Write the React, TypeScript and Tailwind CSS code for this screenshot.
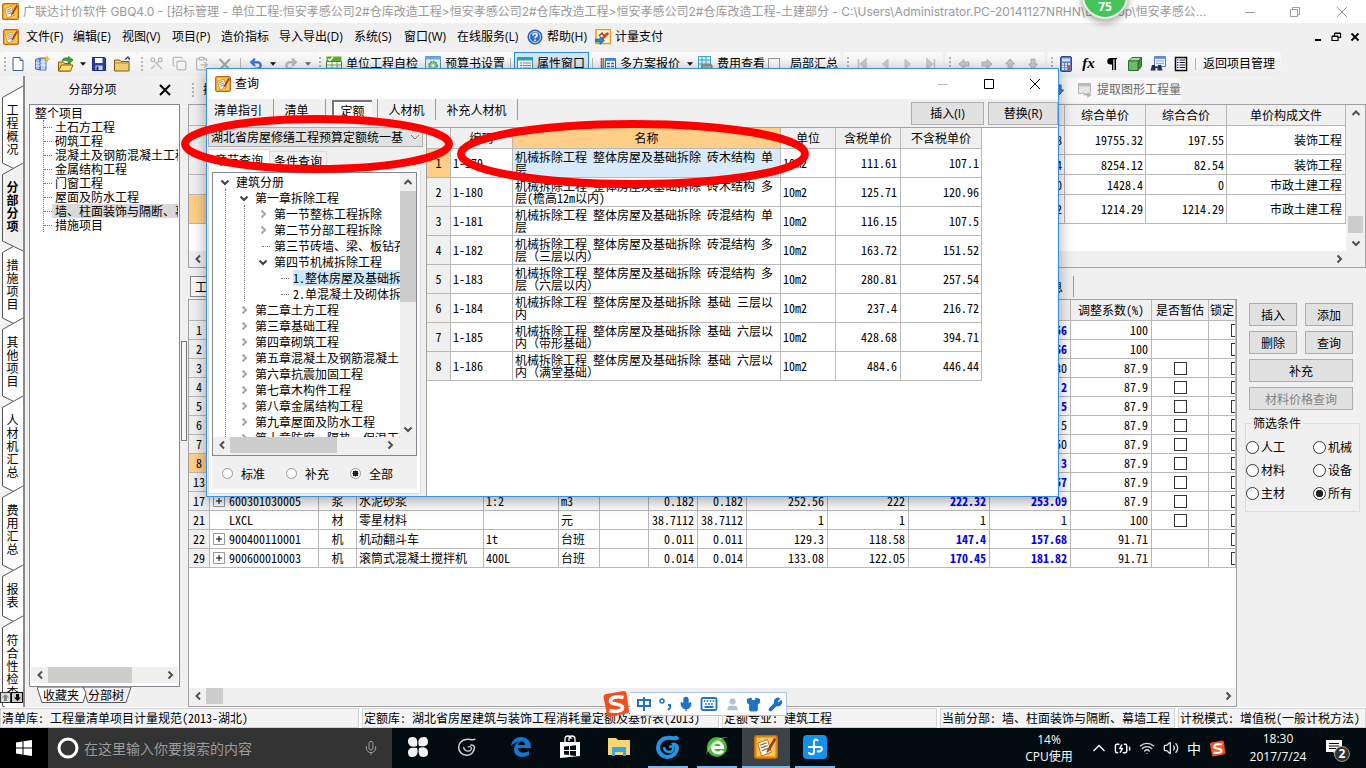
import React from "react";
import { Mic, Wrench, Shirt, Keyboard, Scissors, Copy, ClipboardPaste, Undo2, Redo2, BatteryCharging, Wifi, Volume2, User } from "lucide-react";

const songti = "font-['Noto_Sans_Mono_CJK_SC','Noto_Sans_CJK_SC',monospace]";
const yahei = "font-['Open_Sans','Noto_Sans_CJK_SC',sans-serif]";

/* ---------- small drawings ---------- */

function AppIcon({ size = 16 }: { size?: number }) {
  return (
    <svg width={size} height={size} viewBox="0 0 16 16" className="shrink-0">
      <rect x="0.5" y="0.5" width="15" height="15" rx="1.5" fill="#f6a01a" stroke="#c06a10" />
      <rect x="2" y="2" width="12" height="12" fill="#fdc95a" />
      <path d="M2.500 5.500 9 3l2.500 8.500-6.500 2.500z" fill="#fffdf4" stroke="#a8641a" strokeWidth=".6" />
      <path d="M4 6.800l4.500-1.600M4.600 8.600l4.500-1.600M5.200 10.400l4-1.500" stroke="#8a6b3a" strokeWidth=".8" />
      <path d="M13.600 2 9.200 9.600l-.6 2 1.600-1.200L14.500 3z" fill="#b93c0c" stroke="#7c2d12" strokeWidth=".5" />
    </svg>
  );
}

function Chevron({ dir, color = "#505050" }: { dir: "left" | "right" | "up" | "down"; color?: string }) {
  const d = {
    left: "M8 2.500 4.500 6 8 9.500",
    right: "M4.500 2.500 8 6 4.500 9.500",
    up: "M2.500 8 6 4.500 9.500 8",
    down: "M2.500 4.500 6 8 9.500 4.500",
  }[dir];
  return (
    <svg width="12" height="12" viewBox="0 0 12 12" className="shrink-0">
      <path d={d} fill="none" stroke={color} strokeWidth="2" />
    </svg>
  );
}

function Caret({ color = "#111" }: { color?: string }) {
  return (
    <svg width="6" height="4" viewBox="0 0 7 4">
      <path d="M0 0h7L3.500 4z" fill={color} />
    </svg>
  );
}

function Grip() {
  return (
    <svg width="3" height="16" viewBox="0 0 3 16" className="shrink-0">
      <path d="M0 1h2v2H0zM0 5h2v2H0zM0 9h2v2H0zM0 13h2v2H0z" fill="#b4b4b4" />
    </svg>
  );
}

function ToolIcon({ name }: { name: string }) {
  const body: Record<string, React.ReactNode> = {
    doc: (
      <>
        <path d="M3 1.500h7l3 3v10H3z" fill="#fff" stroke="#41618c" />
        <path d="M10 1.500v3h3" fill="#c9d8ee" stroke="#41618c" />
      </>
    ),
    newProject: (
      <>
        <path d="M1.500 3.500 6 2v12l-4.500-1zM6 2h6v12H6z" fill="#9dbce8" stroke="#3f67a8" strokeWidth=".9" />
        <path d="M8 3v11M10 3v11M6 6h6M6 9h6M1.500 7H6M1.500 10H6" stroke="#fff" strokeWidth=".7" />
        <path d="M13 0l.8 2.200L16 3l-2.200.8L13 6l-.8-2.200L10 3l2.200-.8z" fill="#f7c51e" stroke="#e0a400" strokeWidth=".5" />
      </>
    ),
    open: (
      <>
        <path d="M.5 6h5l1 1.500h6V15H.5z" fill="#f5c243" stroke="#8a6212" />
        <path d="M.5 15 3.500 9H15l-2.500 6z" fill="#fbdc78" stroke="#8a6212" />
        <path d="M4 5c1-3 4-4 6.500-2.500V.5L15 4l-4.500 4V5.500C8.500 4 6 4 4 5z" fill="#3aa935" stroke="#1d6b1a" strokeWidth=".7" />
      </>
    ),
    save: (
      <>
        <path d="M1.500 1.500h12l1 1v12h-13z" fill="#2b3f9e" stroke="#1b2a78" />
        <path d="M4 2h7.500v5H4z" fill="#fff" />
        <path d="M4.500 9.500h7V14h-7z" fill="#cdd5ef" />
        <path d="M5.500 10.500h2V14h-2z" fill="#1b2a78" />
      </>
    ),
    folder: (
      <>
        <path d="M.5 4h5l1.500 1.500h8V15H.5z" fill="#f2cb73" stroke="#7a5a1c" />
        <path d="M.5 7h14" stroke="#b48a36" />
        <path d="M11 3.500 14 1l2 3" fill="none" stroke="#334d88" strokeWidth="1.500" />
      </>
    ),
    check: (
      <>
        <path d="M.5.500h15v5H.5z" fill="#5cae2b" />
        <path d="M.5 5.500h15v10H.5z" fill="#fff" stroke="#4b7f35" />
        <path d="M1 9h15M1 12h15M6 6v10M11 6v10" stroke="#76a95b" />
        <path d="M2 3l2 1.500L7 1" stroke="#fff" strokeWidth="1.300" fill="none" />
      </>
    ),
    gear: (
      <>
        <path d="M.5.500h15v15H.5z" fill="#e5f0fb" stroke="#5a8fc4" />
        <path d="M.5.500h15v3H.5z" fill="#72aade" />
        <circle cx="8" cy="9.500" r="4" fill="#8ccf8f" stroke="#3f9447" strokeDasharray="1.600 1" strokeWidth="1.500" />
        <circle cx="8" cy="9.500" r="1.500" fill="#fff" />
      </>
    ),
    prop: (
      <>
        <path d="M.5 1.500h15v13H.5z" fill="#fff" stroke="#5d8a96" />
        <path d="M.5 1.500h15v3H.5z" fill="#27a3bf" />
        <path d="M3 7h2M3 9.500h2M3 12h2" stroke="#3aa935" />
        <path d="M6 7h8M6 9.500h8M6 12h8" stroke="#888" />
      </>
    ),
    multi: (
      <>
        <path d="M1.500 2v12" stroke="#d33" strokeWidth="1.500" />
        <path d="M3.500 2v12" stroke="#3a3" strokeWidth="1.500" />
        <path d="M5.500 2.500h10v11h-10z" fill="#fff" stroke="#2867c0" />
        <path d="M5.500 2.500h10v2.500h-10z" fill="#4b8fe0" />
        <path d="M7 7.500h3M11 7.500h3M7 10.500h3M11 10.500h3" stroke="#2867c0" strokeWidth="1.500" />
      </>
    ),
    fee: (
      <>
        <path d="M1.500.500h12v12h-12z" fill="#d6f1fa" stroke="#3fa7c8" />
        <path d="M1.500 4h12M1.500 8h12M5 .500v12M9 .500v12" stroke="#3fa7c8" />
        <path d="M5 9h10v5H5z" fill="#b9a98a" stroke="#80704f" />
      </>
    ),
    calc: (
      <>
        <rect x="2.500" y=".5" width="11" height="15" rx="1.500" fill="#5b7fc4" stroke="#2d4a88" />
        <path d="M4 2.500h8v3H4z" fill="#d5e4fb" />
        <path d="M4 8h2M7 8h2M10 8h2M4 10.500h2M7 10.500h2M4 13h2M7 13h2" stroke="#fff" strokeWidth="1.500" />
        <path d="M10 10.500h2M10 13h2" stroke="#e33" strokeWidth="1.500" />
      </>
    ),
    cube: (
      <>
        <path d="M1.500 5 5 1.500h9.500L11 5z" fill="#a8dca0" stroke="#2f6e31" />
        <path d="M11 5l3.500-3.500v9L11 14.500z" fill="#3d8a41" stroke="#2f6e31" />
        <path d="M1.500 5H11v9.500H1.500z" fill="#6dbb66" stroke="#2f6e31" />
      </>
    ),
    find: (
      <>
        <path d="M4.500.500h11v10h-11z" fill="#eaf2fd" stroke="#5277b8" />
        <path d="M4.500.500h11v2.500h-11z" fill="#6b96dc" />
        <path d="M6 5h8M6 7.500h8" stroke="#8aa7d3" />
        <path d="M2 9h3v2h3V9h3l1.500 5.500h-5V12h-2v2.500H.5z" fill="#223250" />
      </>
    ),
    list: (
      <>
        <path d="M2.500 1.500h11v13h-11z" fill="#fff" stroke="#000" strokeWidth="1.500" />
        <path d="M4 4h1.500M4 6.500h1.500M4 9h1.500M4 11.500h1.500" stroke="#00f" />
        <path d="M6.500 4H12M6.500 6.500H12M6.500 9H12M6.500 11.500H12" stroke="#113" />
      </>
    ),
    pilcrow: <path d="M13 2H6.500a3 3 0 0 0 0 6.500H8V14h1.300V3.200h1.200V14H12V3.200h1z" fill="#000" />,
    cross: <path d="M2.500 3 13 14M13 3 2.500 14" stroke="#a8a8a8" strokeWidth="2" />,
    first: <path d="M4.500 3v10M12 3l-5.500 5 5.500 5z" fill="#ccc" stroke="#c4c4c4" strokeWidth="1.500" />,
    prev: <path d="M11 3 5.500 8l5.500 5z" fill="#ccc" stroke="#c4c4c4" />,
    next: <path d="M5 3l5.500 5L5 13z" fill="#ccc" stroke="#c4c4c4" />,
    last: <path d="M11.500 3v10M4 3l5.500 5L4 13z" fill="#ccc" stroke="#c4c4c4" strokeWidth="1.500" />,
    aLeft: <path d="M3 8l5-4.500v2.500h5v4H8v2.500z" fill="#c9c9c9" stroke="#b0b0b0" />,
    aRight: <path d="M13 8 8 3.500v2.500H3v4h5v2.500z" fill="#c9c9c9" stroke="#b0b0b0" />,
    aUp: <path d="M8 3l4.500 5H10v5H6V8H3.500z" fill="#c9c9c9" stroke="#b0b0b0" />,
    aDown: <path d="M8 13l4.500-5H10V3H6v5H3.500z" fill="#c9c9c9" stroke="#b0b0b0" />,
    blueDown: <path d="M8 13l4.500-5H10V3H6v5H3.500z" fill="#4f86e0" stroke="#2a55a8" />,
    extract: (
      <>
        <path d="M1.500 1.500h12v10h-12z" fill="#e6e6e6" stroke="#b5b5b5" />
        <path d="M1.500 1.500h12v3h-12z" fill="#bdbdbd" />
        <path d="M5 7c0 3 2 4 5 4V9l5 4-5 3.500V14c-4 0-6-3-5-7z" fill="#b5b5b5" stroke="#fff" strokeWidth=".6" />
      </>
    ),
    help: (
      <>
        <circle cx="8" cy="8" r="7" fill="#2f6fd0" stroke="#1b4a98" />
        <circle cx="8" cy="8" r="5.500" fill="none" stroke="#cfe0fb" />
        <path d="M6 6.500c0-3 4.500-2.500 4 0-.2 1-2 1.200-2 2.700M8 10.500V12" fill="none" stroke="#fff" strokeWidth="1.600" />
      </>
    ),
    pay: (
      <>
        <path d="M1 .500h14.500v14H1z" fill="#fff4d0" stroke="#e39a1e" strokeWidth="1.500" />
        <path d="M4 7l3-3 2 3 3-3" fill="none" stroke="#a0301c" strokeWidth="1.400" />
        <path d="M6 9l7-6 1 2-6 6z" fill="#d8452a" />
        <path d="M0 10h5V7.500l4.500 4L5 15.500V13H0z" fill="#1c8fd0" stroke="#0b5f96" strokeWidth=".6" />
      </>
    ),
  };
  return (
    <svg width="16" height="16" viewBox="0 0 16 16" fill="none" className="shrink-0">
      {body[name]}
    </svg>
  );
}

function IconButton({ label, w, children }: { label: string; w: string; children: React.ReactNode }) {
  return (
    <button aria-label={label} className={`flex h-6 shrink-0 items-center justify-center ${w}`}>
      {children}
    </button>
  );
}

function ToolGroup({ children, className = "" }: { children: React.ReactNode; className?: string }) {
  return (
    <div className={`flex h-6 shrink-0 items-center rounded bg-gradient-to-b from-[#fbfbfb] to-[#ededed] pl-1 ${className}`}>
      <Grip />
      {children}
    </div>
  );
}

function Divider() {
  return <span className="mx-[3px] h-3 w-px shrink-0 bg-[#b8b8b8]" />;
}

/* ---------- scroll bars ---------- */

function HScroll({ thumb, className = "" }: { thumb: string; className?: string }) {
  return (
    <div className={`flex h-4 shrink-0 items-center bg-[#f0f0f0] ${className}`}>
      <span className="flex w-[17px] shrink-0 justify-center">
        <Chevron dir="left" />
      </span>
      <span className="flex h-full min-w-0 flex-1">
        <span className={`h-full bg-[#cdcdcd] ${thumb}`} />
      </span>
      <span className="flex w-[17px] shrink-0 justify-center">
        <Chevron dir="right" />
      </span>
    </div>
  );
}

/* ---------- window chrome ---------- */

function TitleBar() {
  return (
    <header className="flex h-[23px] shrink-0 items-center bg-white pl-[2px] font-['Inter','Noto_Sans_CJK_SC',sans-serif] text-[12px] text-[#999]">
      <AppIcon size={17} />
      <span className="ml-1 min-w-0 flex-1 truncate whitespace-nowrap">
        广联达计价软件 GBQ4.0 - [招标管理 - 单位工程:恒安孝感公司2#仓库改造工程&gt;恒安孝感公司2#仓库改造工程&gt;恒安孝感公司2#仓库改造工程-土建部分 - C:\Users\Administrator.PC-20141127NRHN\Desktop\恒安孝感公...
      </span>
      <div className="flex shrink-0">
        <button aria-label="最小化" className="flex w-[45px] justify-center">
          <svg width="12" height="12"><path d="M1 6.500h10" stroke="#999" /></svg>
        </button>
        <button aria-label="还原" className="flex w-[45px] justify-center">
          <svg width="12" height="12" fill="none"><path d="M1.500 3.500h7v7h-7zM3.500 3V1.500h7v7H9" stroke="#999" /></svg>
        </button>
        <button aria-label="关闭" className="flex w-[49px] justify-center">
          <svg width="12" height="12"><path d="M1 1l10 10M11 1 1 11" stroke="#999" /></svg>
        </button>
      </div>
    </header>
  );
}

const menus: [string, string][] = [
  ["文件(F)", "w-[47px]"],
  ["编辑(E)", "w-[49px]"],
  ["视图(V)", "w-[50px]"],
  ["项目(P)", "w-[49px]"],
  ["造价指标", "w-[58px]"],
  ["导入导出(D)", "w-[75px]"],
  ["系统(S)", "w-[50px]"],
  ["窗口(W)", "w-[53px]"],
  ["在线服务(L)", "w-[70px]"],
];

function MenuBar() {
  return (
    <nav className={`flex h-[28px] shrink-0 items-center bg-[#f0f0f0] pl-[3px] text-[12px] ${yahei}`}>
      <AppIcon size={16} />
      <span className="w-[7px]" />
      {menus.map(([m, w]) => (
        <button key={m} className={`shrink-0 whitespace-nowrap text-left ${w}`}>{m}</button>
      ))}
      <ToolIcon name="help" />
      <button className="ml-1 w-[48px] shrink-0 text-left whitespace-nowrap">帮助(H)</button>
      <ToolIcon name="pay" />
      <button className="ml-1 shrink-0 whitespace-nowrap">计量支付</button>
      <div className="ml-auto flex items-center gap-2 pr-[6px]">
        <svg width="10" height="10"><path d="M2 8h6" stroke="#000" strokeWidth="2" /></svg>
        <svg width="11" height="10" fill="none"><path d="M1 4.500h6v4H1zM3.500 4V1.500h6v4H7M1 4h6M3.500 1h6" stroke="#000" strokeWidth="1.200" /></svg>
        <svg width="10" height="10"><path d="M1.500 1.500l7 7M8.500 1.500l-7 7" stroke="#000" strokeWidth="1.800" /></svg>
      </div>
    </nav>
  );
}

function Toolbar() {
  const faded = "#b8b8b8";
  return (
    <div className={`flex h-[25px] shrink-0 items-center overflow-hidden whitespace-nowrap bg-[#f0f0f0] text-[12px] ${yahei}`}>
      <ToolGroup className="w-[137px]">
        <IconButton label="新建" w="w-[22px]"><ToolIcon name="doc" /></IconButton>
        <IconButton label="新建项目" w="w-[25px]"><ToolIcon name="newProject" /></IconButton>
        <IconButton label="打开" w="w-[24px]"><ToolIcon name="open" /></IconButton>
        <IconButton label="打开选项" w="w-[9px]"><Caret /></IconButton>
        <IconButton label="保存" w="w-[24px]"><ToolIcon name="save" /></IconButton>
        <IconButton label="目录" w="w-[22px]"><ToolIcon name="folder" /></IconButton>
      </ToolGroup>
      <ToolGroup className="w-[178px]">
        <IconButton label="剪切" w="w-[24px]"><Scissors size={15} color={faded} className="rotate-90" /></IconButton>
        <IconButton label="复制" w="w-[22px]"><Copy size={15} color={faded} /></IconButton>
        <IconButton label="粘贴" w="w-[23px]"><ClipboardPaste size={15} color={faded} /></IconButton>
        <IconButton label="删除" w="w-[24px]"><ToolIcon name="cross" /></IconButton>
        <Divider />
        <IconButton label="撤消" w="w-[24px]"><Undo2 size={14} strokeWidth={4} color="#3f7ad0" /></IconButton>
        <IconButton label="撤消选项" w="w-[10px]"><Caret /></IconButton>
        <IconButton label="恢复" w="w-[25px]"><Redo2 size={14} strokeWidth={4} color={faded} /></IconButton>
        <IconButton label="恢复选项" w="w-[9px]"><Caret color="#666" /></IconButton>
      </ToolGroup>
      <ToolGroup className="w-[526px]">
        <button className="flex w-[102px] shrink-0 items-center gap-1 pl-1"><ToolIcon name="check" />单位工程自检</button>
        <button className="flex w-[83px] shrink-0 items-center gap-1 pl-[1px]"><ToolIcon name="gear" />预算书设置</button>
        <Divider />
        <button className="flex h-6 w-[75px] shrink-0 items-center gap-1 border border-[#2a8ad8] bg-[#d3e6f5] pl-[2px]"><ToolIcon name="prop" />属性窗口</button>
        <Divider />
        <button className="flex w-[97px] shrink-0 items-center gap-1 pl-1"><ToolIcon name="multi" />多方案报价<span className="ml-[3px]"><Caret /></span></button>
        <button className="flex w-[72px] shrink-0 items-center gap-1 pl-1"><ToolIcon name="fee" />费用查看</button>
        <label className="flex shrink-0 items-center gap-[10px] pl-[3px]">
          <input type="checkbox" className="m-0 h-3 w-3 appearance-none border border-[#999] bg-[#f8f8f8]" />
          局部汇总
        </label>
      </ToolGroup>
      <ToolGroup className="ml-[2px] w-[100px]">
        {["first", "prev", "next", "last"].map((n) => (
          <IconButton key={n} label={n} w="w-[23px]"><ToolIcon name={n} /></IconButton>
        ))}
      </ToolGroup>
      <ToolGroup className="ml-[2px] w-[100px]">
        {["aLeft", "aRight", "aUp", "aDown"].map((n) => (
          <IconButton key={n} label={n} w="w-[23px]"><ToolIcon name={n} /></IconButton>
        ))}
      </ToolGroup>
      <ToolGroup className="ml-[2px] w-[234px]">
        <IconButton label="计算器" w="w-[23px]"><ToolIcon name="calc" /></IconButton>
        <IconButton label="函数" w="w-[23px]">
          <span className="font-['Liberation_Serif',serif] text-[15px] font-bold italic">fx</span>
        </IconButton>
        <IconButton label="段落" w="w-[23px]"><ToolIcon name="pilcrow" /></IconButton>
        <IconButton label="图形" w="w-[23px]"><ToolIcon name="cube" /></IconButton>
        <IconButton label="查找" w="w-[23px]"><ToolIcon name="find" /></IconButton>
        <IconButton label="列表" w="w-[23px]"><ToolIcon name="list" /></IconButton>
        <Divider />
        <button className="ml-1 shrink-0">返回项目管理</button>
      </ToolGroup>
    </div>
  );
}

/* ---------- left side ---------- */

const sideTabs = [
  { text: "工程概况", h: 77 },
  { text: "分部分项", h: 78, active: true },
  { text: "措施项目", h: 77 },
  { text: "其他项目", h: 78 },
  { text: "人材机汇总", h: 90 },
  { text: "费用汇总", h: 79 },
  { text: "报表", h: 51 },
  { text: "符合性检查", h: 90 },
];

function SideTabs() {
  return (
    <aside className="relative w-[25px] shrink-0 overflow-hidden border-r-2 border-[#8a8a8a] bg-[#f4f4f4] pt-4">
      {sideTabs.map(({ text, h, active }) => (
        <button key={text} className={`relative flex w-full justify-center pl-[2px] ${active ? "z-10" : ""}`} style={{ height: h }}>
          <svg className="absolute left-0 top-0 overflow-visible" width="23" height={h}>
            <path
              d={`M23 -6 L2.500 5.500 V${h - 6} L23 ${h + 4}`}
              fill={active ? "#f0f0f0" : "#fff"}
              stroke="#555"
            />
          </svg>
          <span className={`relative mt-[11px] w-3 text-[12px] leading-[13px] break-all ${active ? "font-bold" : ""}`}>{text}</span>
        </button>
      ))}
      <div className="absolute bottom-1 left-0 z-20 flex">
        <span className="flex h-[11px] w-[11px] items-center justify-center border border-[#333] bg-[#ddd]">
          <svg width="7" height="7"><path d="M3.500 0 7 3.500H5V7H2V3.500H0z" fill="#888" /></svg>
        </span>
        <span className="flex h-[11px] w-[12px] items-center justify-center border border-[#000] bg-[#ccc]">
          <svg width="7" height="7"><path d="M3.500 7 7 3.500H5V0H2v3.500H0z" fill="#000" /></svg>
        </span>
      </div>
    </aside>
  );
}

const projectTree = ["土石方工程", "砌筑工程", "混凝土及钢筋混凝土工程", "金属结构工程", "门窗工程", "屋面及防水工程", "墙、柱面装饰与隔断、幕墙工程", "措施项目"];

function ProjectPanel() {
  return (
    <section className="ml-1 flex w-[151px] shrink-0 flex-col">
      <div className={`relative flex h-[28px] shrink-0 items-center justify-center pr-6 text-[12px] ${yahei}`}>
        分部分项
        <button aria-label="关闭面板" className="absolute right-[9px] top-2">
          <svg width="12" height="12"><path d="M1 1l10 10M11 1 1 11" stroke="#000" strokeWidth="2" /></svg>
        </button>
      </div>
      <div className="flex min-h-0 flex-1 flex-col border border-[#828790] bg-white px-px">
        <div className="min-h-0 flex-1 overflow-hidden pt-px">
          <div className="pl-1 text-[12px] leading-[14px]">整个项目</div>
          <ul className="ml-3 overflow-hidden border-l border-dotted border-[#777]">
            {projectTree.map((t) => (
              <li key={t} className="flex items-center whitespace-nowrap text-[12px] leading-[14px]">
                <span className="w-2 shrink-0 border-t border-dotted border-[#777]" />
                <span className={`min-w-0 pl-[3px] ${t.startsWith("墙") ? "flex-1 overflow-hidden bg-[#d9d9d9]" : ""}`}>{t}</span>
              </li>
            ))}
          </ul>
        </div>
        <HScroll thumb="w-[84px]" />
        <span className="h-[3px]" />
      </div>
      <div className="relative flex h-[20px] shrink-0 items-start pl-2 text-[12px] leading-[16px]">
        <svg width="110" height="17" className="absolute left-2 top-0" fill="#fff" stroke="#555">
          <path d="M46 0h48l-5 15.500H51z" fill="#f0f0f0" />
          <path d="M0 0h46l3 6-3 9.500H5z" />
        </svg>
        <button className="relative ml-[6px]">收藏夹</button>
        <button className="relative ml-[9px]">分部树</button>
      </div>
    </section>
  );
}

/* ---------- grids ---------- */

const cell = "h-full overflow-hidden whitespace-nowrap border-b border-r border-[#b8b8b8] p-0";

function CheckBox({ label }: { label: string }) {
  return <input type="checkbox" aria-label={label} className="m-0 block h-[13px] w-[13px] appearance-none border border-[#333] bg-white" />;
}

const upperRows: { h: string; q: string; price: string; total: string; file: string; mark?: boolean }[] = [
  { h: "h-[29px]", q: "8", price: "19755.32", total: "197.55", file: "装饰工程" },
  { h: "h-[20px]", q: "4", price: "8254.12", total: "82.54", file: "装饰工程" },
  { h: "h-[20px]", q: "0", price: "1428.4", total: "0", file: "市政土建工程" },
  { h: "h-[29px]", q: "2", price: "1214.29", total: "1214.29", file: "市政土建工程", mark: true },
];

function UpperGrid() {
  return (
    <div className="flex h-[164px] shrink-0 flex-col border border-[#a0a0a0] bg-white">
      <div className="flex min-h-0 flex-1">
        <div className="min-w-0 flex-1 overflow-hidden">
          <table className="w-full table-fixed border-separate border-spacing-0 text-[12px]">
            <colgroup>
              <col className="w-[21px]" />
              <col />
              <col className="w-[81px]" />
              <col className="w-[81px]" />
              <col className="w-[119px]" />
            </colgroup>
            <thead>
              <tr className="h-[21px] bg-[#f0f0f0]">
                <th className={cell} />
                <th className={cell} />
                <th className={`${cell} font-normal`}>综合单价</th>
                <th className={`${cell} font-normal`}>综合合价</th>
                <th className={`${cell} font-normal`}>单价构成文件</th>
              </tr>
            </thead>
            <tbody>
              {upperRows.map((r) => (
                <tr key={r.price} className={`${r.h} text-right`}>
                  <td className={`${cell} ${r.mark ? "bg-[#ffcf88]" : "bg-[#f0f0f0]"}`} />
                  <td className={`${cell} pr-[2px]`}>{r.q}</td>
                  <td className={`${cell} pr-[2px]`}>{r.price}</td>
                  <td className={`${cell} pr-[2px]`}>{r.total}</td>
                  <td className={`${cell} pr-[3px]`}>{r.file}</td>
                </tr>
              ))}
            </tbody>
          </table>
        </div>
        <div className="flex w-[19px] shrink-0 flex-col items-center bg-[#f0f0f0] py-[2px]">
          <Chevron dir="up" />
          <span className="mt-auto mb-1 h-[17px] w-[15px] bg-[#cdcdcd]" />
          <Chevron dir="down" />
        </div>
      </div>
      <div className="bg-[#f0f0f0] pr-[18px]">
        <HScroll thumb="w-0" />
      </div>
    </div>
  );
}

type Row = { n: string; plus?: boolean; code?: string; kind?: string; name?: string; spec?: string; unit?: string; a?: string; b?: string; c?: string; d?: string; e?: string; f: string; blue?: boolean; k: string; est?: boolean; mark?: boolean };

const lowerRows: Row[] = [
  { n: "1", f: "56", blue: true, k: "100" },
  { n: "2", f: "66", blue: true, k: "100" },
  { n: "3", f: "80", k: "87.9", est: true },
  { n: "4", f: "2", blue: true, k: "87.9", est: true },
  { n: "5", f: "5", blue: true, k: "87.9", est: true },
  { n: "6", f: "5", k: "87.9", est: true },
  { n: "7", f: "60", k: "87.9", est: true },
  { n: "8", f: "3", blue: true, k: "87.9", est: true, mark: true },
  { n: "13", f: "57", blue: true, k: "87.9", est: true },
  { n: "17", plus: true, code: "600301030005", kind: "浆", name: "水泥砂浆", spec: "1:2", unit: "m3", a: "0.182", b: "0.182", c: "252.56", d: "222", e: "222.32", f: "253.09", blue: true, k: "87.9", est: true },
  { n: "21", code: "LXCL", kind: "材", name: "零星材料", spec: "", unit: "元", a: "38.7112", b: "38.7112", c: "1", d: "1", e: "1", f: "1", k: "100", est: true },
  { n: "22", plus: true, code: "900400110001", kind: "机", name: "机动翻斗车", spec: "1t", unit: "台班", a: "0.011", b: "0.011", c: "129.3", d: "118.58", e: "147.4", f: "157.68", blue: true, k: "91.71" },
  { n: "29", plus: true, code: "900600010003", kind: "机", name: "滚筒式混凝土搅拌机", spec: "400L", unit: "台班", a: "0.014", b: "0.014", c: "133.08", d: "122.05", e: "170.45", f: "181.82", blue: true, k: "91.71" },
];

function LowerGrid() {
  return (
    <div className="flex min-h-0 min-w-0 flex-1 flex-col border border-[#a0a0a0] bg-white">
      <div className="min-h-0 flex-1 overflow-hidden">
        <table className="w-full table-fixed border-separate border-spacing-0 text-[12px]">
          <colgroup>
            <col className="w-[21px]" />
            <col className="w-[109px]" />
            <col className="w-[38px]" />
            <col />
            <col className="w-[75px]" />
            <col className="w-[41px]" />
            <col className="w-[49px]" />
            <col className="w-[49px]" />
            <col className="w-[49px]" />
            <col className="w-[81px]" />
            <col className="w-[81px]" />
            <col className="w-[81px]" />
            <col className="w-[81px]" />
            <col className="w-[81px]" />
            <col className="w-[57px]" />
            <col className="w-[27px]" />
          </colgroup>
          <thead>
            <tr className="h-[21px] bg-[#f0f0f0]">
              {Array.from({ length: 13 }, (_, i) => <th key={i} className={cell} />)}
              <th className={`${cell} font-normal`}>调整系数(%)</th>
              <th className={`${cell} font-normal`}>是否暂估</th>
              <th className={`${cell} font-normal`}>锁定</th>
            </tr>
          </thead>
          <tbody>
            {lowerRows.map((r) => {
              const num = `${cell} pr-[3px] text-right`;
              const strong = `${num} ${r.blue ? "font-bold text-[#0000e6]" : ""}`;
              return (
                <tr key={r.n} className="h-[19px] leading-[18px]">
                  <td className={`${cell} text-center ${r.mark ? "bg-[#ffcf88]" : "bg-[#f0f0f0]"}`}>{r.n}</td>
                  <td className={cell}>
                    <span className="flex items-center gap-1 pl-[3px]">
                      <svg width="12" height="12" fill="none" className="shrink-0">
                        {r.plus && <path d="M.5.500h11v11H.5z" stroke="#999" />}
                        {r.plus && <path d="M3 6h6M6 3v6" stroke="#000" />}
                      </svg>
                      {r.code}
                    </span>
                  </td>
                  <td className={`${cell} text-center`}>{r.kind}</td>
                  <td className={`${cell} pl-[2px]`}>{r.name}</td>
                  <td className={`${cell} pl-[2px]`}>{r.spec}</td>
                  <td className={`${cell} pl-[2px]`}>{r.unit}</td>
                  <td className={cell} />
                  <td className={num}>{r.a}</td>
                  <td className={num}>{r.b}</td>
                  <td className={num}>{r.c}</td>
                  <td className={num}>{r.d}</td>
                  <td className={strong}>{r.e}</td>
                  <td className={strong}>{r.f}</td>
                  <td className={num}>{r.k}</td>
                  <td className={cell}>
                    {r.est && <span className="flex justify-center"><CheckBox label={`暂估 ${r.n}`} /></span>}
                  </td>
                  <td className={`${cell} pl-[22px]`}><CheckBox label={`锁定 ${r.n}`} /></td>
                </tr>
              );
            })}
          </tbody>
        </table>
      </div>
      <HScroll thumb="w-[17px]" />
      <span className="h-[2px] shrink-0 bg-[#f0f0f0]" />
    </div>
  );
}

/* ---------- right side ---------- */

const push = "h-[23px] border border-[#adadad] bg-[#e1e1e1] text-[12px] leading-[20px]";

function Radio({ name, label, checked, small }: { name: string; label: string; checked?: boolean; small?: boolean }) {
  return (
    <label className={`flex items-center whitespace-nowrap ${small ? "gap-2" : "gap-[2px]"}`}>
      <input
        type="radio"
        name={name}
        defaultChecked={checked}
        className={`m-0 shrink-0 appearance-none rounded-full border bg-white checked:bg-[radial-gradient(circle,#222_45%,#fff_50%)] ${small ? "h-[11px] w-[11px] border-[#999]" : "h-[13px] w-[13px] border-[#333]"}`}
      />
      {label}
    </label>
  );
}

function ActionPanel() {
  return (
    <aside className="flex w-[129px] shrink-0 flex-col pl-2 pr-[6px] text-[12px]">
      <div className="mx-1 grid grid-cols-[48px_48px] justify-between gap-y-[5px] pr-[3px] pt-1">
        <button className={push}>插入</button>
        <button className={push}>添加</button>
        <button className={push}>删除</button>
        <button className={push}>查询</button>
        <button className={`${push} col-span-2`}>补充</button>
        <button disabled className={`${push} col-span-2 bg-[#cccccc] text-[#838383]`}>材料价格查询</button>
      </div>
      <fieldset className="mt-1 h-[98px] border border-[#dcdcdc]">
        <legend className="ml-[5px] px-[2px] leading-[18px]">筛选条件</legend>
        <div className="grid grid-cols-[67px_auto] gap-y-[5px] pt-[6px] leading-[18px]">
          <Radio name="filter" label="人工" />
          <Radio name="filter" label="机械" />
          <Radio name="filter" label="材料" />
          <Radio name="filter" label="设备" />
          <Radio name="filter" label="主材" />
          <Radio name="filter" label="所有" checked />
        </div>
      </fieldset>
    </aside>
  );
}

function Workspace() {
  return (
    <main className="flex min-h-0 min-w-0 flex-1 flex-col">
      <div className={`flex h-[28px] shrink-0 items-center justify-between text-[12px] ${yahei}`}>
        <div className="flex items-center gap-2 pl-1"><Grip /><span>插入</span></div>
        <button className="mr-[185px] flex h-6 items-center gap-1 rounded bg-[#f8f8f8] text-[#6a6a6a]">
          <ToolIcon name="blueDown" />
          <span className="w-[2px]" />
          <ToolIcon name="extract" />
          提取图形工程量
        </button>
      </div>
      <UpperGrid />
      <div className="flex h-[31px] shrink-0 items-end justify-between">
        <button className="mb-[2px] ml-[2px] h-[21px] w-16 border border-[#888] bg-[#f8f8f8] pl-1 text-left text-[12px]">工料机</button>
        <span className="mb-[2px] mr-[292px] border-r border-[#999] pr-[10px] text-[12px] leading-[21px]">信息</span>
      </div>
      <div className="flex min-h-0 flex-1">
        <LowerGrid />
        <ActionPanel />
      </div>
    </main>
  );
}

/* ---------- query dialog ---------- */

const chapterTree: { depth: number; text: string; state: "open" | "closed" | "leaf"; on?: boolean }[] = [
  { depth: 0, text: "建筑分册", state: "open" },
  { depth: 1, text: "第一章拆除工程", state: "open" },
  { depth: 2, text: "第一节整栋工程拆除", state: "closed" },
  { depth: 2, text: "第二节分部工程拆除", state: "closed" },
  { depth: 2, text: "第三节砖墙、梁、板钻孔", state: "leaf" },
  { depth: 2, text: "第四节机械拆除工程", state: "open" },
  { depth: 3, text: "1.整体房屋及基础拆除", state: "leaf", on: true },
  { depth: 3, text: "2.单混凝土及砌体拆除", state: "leaf" },
  { depth: 1, text: "第二章土方工程", state: "closed" },
  { depth: 1, text: "第三章基础工程", state: "closed" },
  { depth: 1, text: "第四章砌筑工程", state: "closed" },
  { depth: 1, text: "第五章混凝土及钢筋混凝土", state: "closed" },
  { depth: 1, text: "第六章抗震加固工程", state: "closed" },
  { depth: 1, text: "第七章木构件工程", state: "closed" },
  { depth: 1, text: "第八章金属结构工程", state: "closed" },
  { depth: 1, text: "第九章屋面及防水工程", state: "closed" },
  { depth: 1, text: "第十章防腐、隔热、保温工程", state: "closed" },
];

const indent = ["pl-[5px]", "pl-[24px]", "pl-[43px]", "pl-[62px]"];

const quotas: [string, string, string, string][] = [
  ["1-179", "机械拆除工程 整体房屋及基础拆除 砖木结构 单\n层", "111.61", "107.1"],
  ["1-180", "机械拆除工程 整体房屋及基础拆除 砖木结构 多\n层(檐高12m以内)", "125.71", "120.96"],
  ["1-181", "机械拆除工程 整体房屋及基础拆除 砖混结构 单\n层", "116.15", "107.5"],
  ["1-182", "机械拆除工程 整体房屋及基础拆除 砖混结构 多\n层（三层以内）", "163.72", "151.52"],
  ["1-183", "机械拆除工程 整体房屋及基础拆除 砖混结构 多\n层（六层以内）", "280.81", "257.54"],
  ["1-184", "机械拆除工程 整体房屋及基础拆除 基础 三层以\n内", "237.4", "216.72"],
  ["1-185", "机械拆除工程 整体房屋及基础拆除 基础 六层以\n内（带形基础）", "428.68", "394.71"],
  ["1-186", "机械拆除工程 整体房屋及基础拆除 基础 六层以\n内（满堂基础）", "484.6", "446.44"],
];

function DialogTab({ text, w, active }: { text: string; w: string; active?: boolean }) {
  return (
    <div className={`flex h-[21px] shrink-0 items-center justify-center border-r border-[#999] ${w}`}>
      <button className={active ? "h-[19px] w-10 border-l-2 border-t-2 border-[#777] bg-[#f8f8f8] leading-[16px]" : ""}>{text}</button>
    </div>
  );
}

function QueryDialog() {
  return (
    <section
      role="dialog"
      aria-label="查询"
      className="absolute left-[206px] top-[68px] z-30 flex h-[429px] w-[853px] flex-col border border-[#3a8fe0] bg-[#f0f0f0] text-[12px] shadow-[0_4px_14px_rgba(0,0,0,0.35)]"
    >
      <div className={`flex h-[30px] shrink-0 items-center bg-white pl-2 ${yahei}`}>
        <AppIcon size={16} />
        <span className="ml-1 flex-1">查询</span>
        <button aria-label="最小化" className="flex w-[46px] justify-center">
          <svg width="12" height="12"><path d="M1 6.500h10" stroke="#bbb" /></svg>
        </button>
        <button aria-label="最大化" className="flex w-[46px] justify-center">
          <svg width="12" height="12" fill="none"><path d="M1.500 1.500h9v9h-9z" stroke="#000" /></svg>
        </button>
        <button aria-label="关闭" className="flex w-[46px] justify-center">
          <svg width="12" height="12"><path d="M1 1l10 10M11 1 1 11" stroke="#000" /></svg>
        </button>
      </div>
      <div className="flex h-[28px] shrink-0 items-start">
        <DialogTab text="清单指引" w="w-[67px] pr-1" />
        <DialogTab text="清单" w="w-[52px] pr-[6px]" />
        <DialogTab text="定额" w="w-[52px]" active />
        <DialogTab text="人材机" w="w-[58px]" />
        <DialogTab text="补充人材机" w="w-[82px]" />
        <div className="ml-auto flex gap-1 pt-[3px]">
          <button className={`${push} w-[73px] ${yahei}`}>插入(I)</button>
          <button className={`${push} w-[70px] ${yahei}`}>替换(R)</button>
        </div>
      </div>
      <div className="flex min-h-0 flex-1">
        <div className="flex w-[216px] shrink-0 flex-col pl-px">
          <div className="relative">
            <select aria-label="定额库" className="h-5 w-full appearance-none overflow-hidden border border-[#adadad] bg-[#e1e1e1] pl-[2px] text-[12px] leading-[16px]">
              <option>湖北省房屋修缮工程预算定额统一基</option>
            </select>
            <span className="pointer-events-none absolute right-[2px] top-1">
              <svg width="12" height="12" fill="none"><path d="M2 4l4 4 4-4" stroke="#777" /></svg>
            </span>
          </div>
          <div className="mt-[2px] flex h-[21px] shrink-0 items-end">
            <button className="h-[21px] w-[62px] border border-b-0 border-[#dcdcdc] bg-white leading-[16px]">章节查询</button>
            <button className="h-[19px] w-[57px] border border-l-0 border-[#dcdcdc] leading-[16px]">条件查询</button>
          </div>
          <div className="mr-[2px] mb-[2px] flex min-h-0 flex-1 flex-col border border-[#dcdcdc] border-t-0 bg-white p-[3px] pb-1 pt-[2px]">
            <div className="flex h-[284px] shrink-0 flex-col border border-[#828790]">
              <div className="flex min-h-0 flex-1">
                <ul className="relative min-w-0 flex-1 overflow-hidden pt-px">
                  <li aria-hidden className="absolute bottom-0 left-3 top-4 border-l border-dotted border-[#777]" />
                  <li aria-hidden className="absolute left-[31px] top-8 h-[96px] border-l border-dotted border-[#777]" />
                  {chapterTree.map((n) => (
                    <li key={n.text} className={`relative flex h-4 items-center whitespace-nowrap leading-4 ${indent[n.depth]}`}>
                      <span className="flex w-[14px] shrink-0 justify-center bg-white">
                        {n.state === "leaf" ? (
                          <span className="mt-px ml-[6px] h-px w-2 border-t border-dotted border-[#777]" />
                        ) : (
                          <Chevron dir={n.state === "open" ? "down" : "right"} color={n.state === "open" ? "#404040" : "#a6a6a6"} />
                        )}
                      </span>
                      <span className={`ml-1 min-w-0 ${n.on ? "flex-1 overflow-hidden bg-[#cce8ff]" : ""}`}>{n.text}</span>
                    </li>
                  ))}
                </ul>
                <div className="flex w-4 shrink-0 flex-col items-center bg-[#f0f0f0]">
                  <span className="flex h-[18px] items-center"><Chevron dir="up" /></span>
                  <span className="h-[111px] w-full bg-[#cdcdcd]" />
                  <span className="mt-auto flex h-4 items-center"><Chevron dir="down" /></span>
                </div>
              </div>
              <HScroll thumb="w-[107px]" className="pr-[18px]" />
              <span className="h-[2px] shrink-0 bg-[#f0f0f0]" />
            </div>
            <div className="flex min-h-0 flex-1 items-center gap-[21px] bg-[#f0f0f0] pl-[10px] pt-[2px]">
              <Radio small name="scope" label="标准" />
              <Radio small name="scope" label="补充" />
              <Radio small name="scope" label="全部" checked />
            </div>
          </div>
        </div>
        <div className="ml-[3px] mr-px min-w-0 flex-1 border-l border-t border-[#a0a0a0] bg-white">
          <table className="w-[555px] table-fixed border-separate border-spacing-0">
            <colgroup>
              <col className="w-[24px]" />
              <col className="w-[62px]" />
              <col className="w-[268px]" />
              <col className="w-[55px]" />
              <col className="w-[65px]" />
              <col className="w-[81px]" />
            </colgroup>
            <thead>
              <tr className="h-[21px] bg-[#f0f0f0]">
                <th className={cell} />
                <th className={`${cell} font-normal`}>编码</th>
                <th className={`${cell} bg-[#ffcf88] font-normal`}>名称</th>
                <th className={`${cell} font-normal`}>单位</th>
                <th className={`${cell} font-normal`}>含税单价</th>
                <th className={`${cell} font-normal`}>不含税单价</th>
              </tr>
            </thead>
            <tbody>
              {quotas.map(([code, name, tax, net], i) => (
                <tr key={code} className="h-[29px]">
                  <td className={`${cell} text-center ${i === 0 ? "bg-[#ffcf88]" : "bg-[#f0f0f0]"}`}>{i + 1}</td>
                  <td className={`${cell} pl-[2px]`}>{code}</td>
                  <td className={`${cell} pl-[2px] ${i === 0 ? "bg-[#d9ebfa]" : ""}`}>
                    <span className="block whitespace-pre leading-[12px]">{name}</span>
                  </td>
                  <td className={`${cell} pl-[2px]`}>10m2</td>
                  <td className={`${cell} pr-[3px] text-right`}>{tax}</td>
                  <td className={`${cell} pr-[2px] text-right`}>{net}</td>
                </tr>
              ))}
            </tbody>
          </table>
        </div>
      </div>
    </section>
  );
}

/* ---------- bottom ---------- */

function StatusBar() {
  const seg = "overflow-hidden whitespace-nowrap border border-[#d4d4d4] bg-[#f4f4f4] pl-px";
  return (
    <footer className="flex h-[21px] shrink-0 gap-[3px] bg-white pt-px text-[12px] leading-[18px]">
      <div className={`w-[359px] ${seg}`}>清单库: 工程量清单项目计量规范(2013-湖北)</div>
      <div className={`w-[357px] ${seg}`}>定额库: 湖北省房屋建筑与装饰工程消耗量定额及基价表(2013)</div>
      <div className={`min-w-0 flex-1 ${seg}`}>定额专业: 建筑工程</div>
      <div className={`w-[235px] ${seg}`}>当前分部: 墙、柱面装饰与隔断、幕墙工程</div>
      <div className={`w-[188px] ${seg}`}>计税模式: 增值税(一般计税方法)</div>
    </footer>
  );
}

function Sogou({ size }: { size: number }) {
  return (
    <svg width={size} height={size} viewBox="0 0 28 28" className="shrink-0">
      <path d="M4 4 22 1q2 0 2.500 2L27 21q0 2-2 2.500L8 27q-2.500 0-3-2L1.500 7Q1.500 4.500 4 4z" fill="#f0501e" />
      <path d="M21.500 7.500C15 6 8.500 7 8.500 11c0 4.500 12 2 12 6.500 0 4-7 4.500-13 3" fill="none" stroke="#fff" strokeWidth="3.600" />
    </svg>
  );
}

function ImeBar() {
  const blue = "#1f72c4";
  return (
    <div className="absolute bottom-[50px] left-[602px] z-40 flex items-center">
      <Sogou size={28} />
      <div className="flex h-[24px] w-[157px] items-center justify-around border border-l-0 border-[#a9c9e6] bg-white pl-1">
        <svg width="14" height="16" fill="none" stroke={blue} strokeWidth="2"><path d="M1 4h12v6H1zM7 1v14" /></svg>
        <svg width="14" height="16" fill="none" stroke={blue}><circle cx="4" cy="5" r="2" strokeWidth="1.500" /><path d="M10 9h2q1 3-2 5" strokeWidth="2" /></svg>
        <Mic size={16} color={blue} fill={blue} />
        <Keyboard size={18} color={blue} strokeWidth={2.500} />
        <User size={15} color="#b4c2d6" fill="#b4c2d6" />
        <Shirt size={15} color={blue} fill={blue} />
        <Wrench size={15} color={blue} fill={blue} />
      </div>
    </div>
  );
}

function Swirl({ size, color, bold }: { size: number; color: string; bold?: boolean }) {
  return (
    <svg width={size} height={size} viewBox="0 0 24 24" fill="none" stroke={color}>
      <path d="M22 2c-3 3-7 0-11 1a9.500 9.500 0 1 0 10 10c0-3-3-4-5-3" strokeWidth={bold ? 4 : 1.800} />
      <path d="M8 12a5 5 0 0 0 9 3c1-3-1-4-4-3" strokeWidth={bold ? 2.500 : 1.500} />
    </svg>
  );
}

function TaskIcon({ label, children, running, active }: { label: string; children: React.ReactNode; running?: boolean; active?: boolean }) {
  return (
    <button aria-label={label} className={`flex h-full w-12 shrink-0 flex-col items-center ${active ? "bg-[#3b4346]" : ""}`}>
      <span className="flex flex-1 items-center">{children}</span>
      <span className={`h-[2px] shrink-0 ${running ? "bg-[#76b9ed]" : ""} ${active ? "w-full" : "w-10"}`} />
    </button>
  );
}

function TaskBar() {
  return (
    <footer className={`flex h-10 shrink-0 items-center bg-[#020c10] text-[12px] text-white ${yahei}`}>
      <button aria-label="开始" className="flex h-full w-12 shrink-0 items-center justify-center bg-black">
        <svg width="16" height="16" fill="#fff"><path d="M0 2.500 6.500 1.500v6H0zM7.500 1.300 16 0v7.500H7.500zM0 8.500h6.500v6L0 13.500zM7.500 8.500H16V16l-8.500-1.300z" /></svg>
      </button>
      <label className="flex h-full w-[344px] shrink-0 items-center bg-[#333] pl-[9px] pr-[13px]">
        <svg width="22" height="22" fill="none"><circle cx="11" cy="11" r="9" stroke="#fff" strokeWidth="3" /></svg>
        <input aria-label="搜索" placeholder="在这里输入你要搜索的内容" className="ml-[5px] min-w-0 flex-1 bg-transparent text-[14px] text-white outline-none placeholder:text-[#9a9a9a]" />
        <Mic size={16} strokeWidth={1.500} color="#a0a0a0" />
      </label>
      <div className="flex h-full items-center gap-px pl-[2px]">
        <TaskIcon label="浏览">
          <svg width="22" height="22" viewBox="0 0 22 22" fill="#f2f2f2">
            <path d="M10 10C4 12 1 9 1 5.500S3 1 6 1c4 0 5 4 4 9zM12 10c-2-6 1-9 4.500-9S21 3 21 6c0 4-4 5-9 4zM12 12c6-2 9 1 9 4.500S19 21 16 21c-4 0-5-4-4-9zM10 12c2 6-1 9-4.500 9S1 19 1 16c0-4 4-5 9-4z" />
          </svg>
        </TaskIcon>
        <TaskIcon label="广联达"><Swirl size={20} color="#d5d5d5" /></TaskIcon>
        <span className="w-1" />
        <TaskIcon label="Edge">
          <svg width="22" height="22" viewBox="0 0 22 22" fill="#0f78d4">
            <path d="M1 10C2 4 6 1 11 1c6 0 10 4 10 11H8c0 5 6 6 11 3v4c-7 4-15 2-15-6 0-3 2-6 5-7-4 0-6 2-8 4zM8 9h7c0-5-6-5-7 0z" />
          </svg>
        </TaskIcon>
        <TaskIcon label="商店">
          <svg width="22" height="24" viewBox="0 0 22 24">
            <path d="M1 7h20v14L1 23z" fill="#fff" />
            <path d="M6 7V4q0-3 3-3t3 3M10 6V4q0-3 3-3t3 3v3" fill="none" stroke="#fff" strokeWidth="1.300" />
            <path d="M5 11.500l5-.5v4H5zM11 10.900l6-.6V15h-6zM5 16h5v4l-5-.5zM11 16h6v5l-6-.8z" fill="#020c10" />
          </svg>
        </TaskIcon>
        <TaskIcon label="资源管理器">
          <svg width="22" height="20" viewBox="0 0 22 20">
            <path d="M0 1h8l2 2h12v15H0z" fill="#f7d774" />
            <path d="M4 10h14v9h-3v-4H7v4H4z" fill="#3aa6e0" />
          </svg>
        </TaskIcon>
        <TaskIcon label="G+工作台" running><Swirl size={24} color="#2196e8" bold /></TaskIcon>
        <TaskIcon label="360浏览器" running>
          <svg width="24" height="24" viewBox="0 0 24 24">
            <circle cx="12" cy="12" r="10" fill="#48b83c" />
            <path d="M17.500 15.500c-2 4-10 3-10-3 0-7 10-7 10 0h-9" fill="none" stroke="#fff" strokeWidth="2.800" />
            <path d="M1 20C2 10 12 1 23 2c-5 1-16 6-22 18z" fill="#a6e38a" fillOpacity=".6" />
          </svg>
        </TaskIcon>
        <TaskIcon label="计价软件" running active><AppIcon size={24} /></TaskIcon>
        <TaskIcon label="云助手" running>
          <svg width="24" height="24" viewBox="0 0 24 24" fill="none" stroke="#fff" strokeWidth="2">
            <rect width="24" height="24" rx="4" fill="#1590ea" stroke="none" />
            <path d="M15 6c-2-3-4-1-4 1v10c0 3-5 3-5 0M5 12h13c2 2 0 6-4 4" />
          </svg>
        </TaskIcon>
      </div>
      <div className="ml-auto flex h-full shrink-0 items-center">
        <div className="w-[60px] text-center leading-[17px]">14%<br />CPU使用</div>
        <div className="ml-[13px] flex items-center gap-2">
          <svg width="14" height="10" fill="none"><path d="M1.500 8 7 2.500 12.500 8" stroke="#fff" strokeWidth="1.300" /></svg>
          <BatteryCharging size={17} color="#fff" />
          <Wifi size={16} color="#ddd" />
          <Volume2 size={16} color="#ddd" />
          <span className="text-[14px]">中</span>
          <Sogou size={17} />
        </div>
        <div className="ml-4 w-[72px] text-center leading-[18px]">18:30<br />2017/7/24</div>
        <div className="relative ml-3 mr-[14px] h-6 w-[26px]">
          <svg width="17" height="17" className="absolute left-0 top-1"><path d="M0 0h16v12h-5v4l-4-4H0z" fill="#fff" /><path d="M3 3.500h10M3 6h10M3 8.500h7" stroke="#000" /></svg>
          <span className="absolute left-2 top-[10px] flex h-4 w-4 items-center justify-center rounded-full border border-[#999] bg-[#333] text-[12px] font-bold">2</span>
        </div>
      </div>
    </footer>
  );
}

export default function App() {
  return (
    <div className={`relative flex h-screen w-full flex-col overflow-hidden bg-[#f0f0f0] text-black ${songti}`}>
      <TitleBar />
      <MenuBar />
      <Toolbar />
      <div className="flex min-h-0 flex-1">
        <SideTabs />
        <ProjectPanel />
        <div className="flex w-2 shrink-0 flex-col pt-[265px] pl-px">
          <span className="h-[100px] w-[6px] border border-[#777] bg-[#f4f4f4]" />
        </div>
        <Workspace />
      </div>
      <StatusBar />
      <TaskBar />

      <QueryDialog />
      <ImeBar />
      <svg className="pointer-events-none absolute left-0 top-0 z-40" width="820" height="200" fill="none" stroke="#fe0000" strokeWidth="8">
        <ellipse cx="317" cy="144" rx="132" ry="25" />
        <ellipse cx="633" cy="154" rx="172" ry="30" />
      </svg>
      <div className={`absolute left-[1082px] top-[-27px] z-40 flex h-[46px] w-[46px] items-end justify-center rounded-full border-2 border-[#e8f5e8] bg-[#45c45c] pb-[2px] text-[12px] leading-4 font-bold text-white shadow-[0_3px_8px_rgba(0,0,0,0.4)] ${yahei}`}>
        75
      </div>
    </div>
  );
}
